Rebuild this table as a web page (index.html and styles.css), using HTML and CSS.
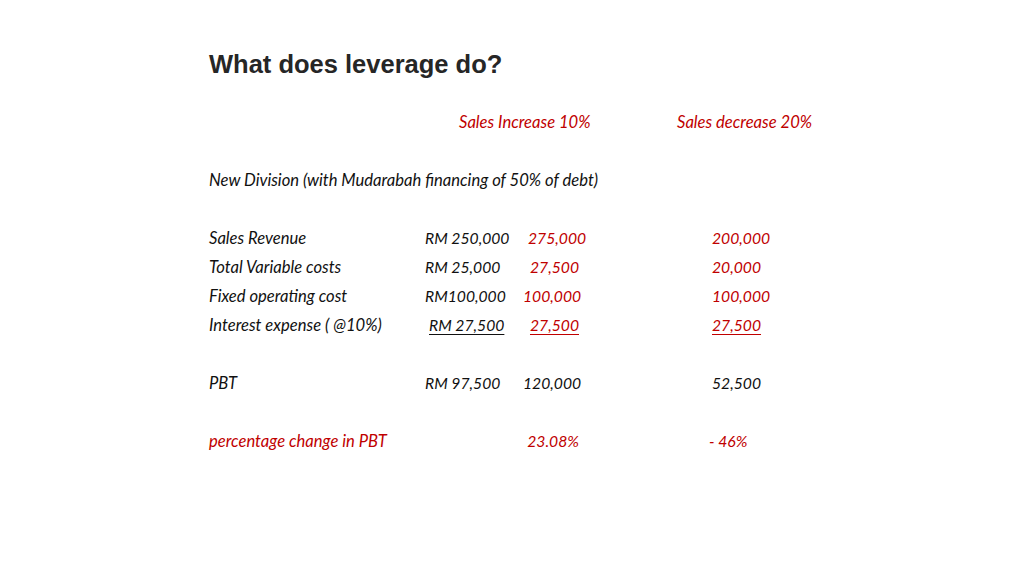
FILE: index.html
```html
<!DOCTYPE html>
<html>
<head>
<meta charset="utf-8">
<link rel="stylesheet" href="styles.css">
</head>
<body>
<main class="slide">
  <h1 class="title">What does leverage do?</h1>
  <div class="sheet">
    <div class="row head">
      <span class="c1"></span><span class="c2"></span>
      <span class="c3 red hd1">Sales Increase 10%</span>
      <span class="c4 red hd2">Sales decrease 20%</span>
    </div>
    <div class="row blank"></div>
    <div class="row"><span class="wide">New Division (with Mudarabah financing of 50% of debt)</span></div>
    <div class="row blank"></div>
    <div class="row">
      <span class="c1">Sales Revenue</span><span class="c2">RM 250,000</span>
      <span class="c3 red s-275">275,000</span><span class="c4 red">200,000</span>
    </div>
    <div class="row">
      <span class="c1">Total Variable costs</span><span class="c2">RM 25,000</span>
      <span class="c3 red">27,500</span><span class="c4 red">20,000</span>
    </div>
    <div class="row">
      <span class="c1">Fixed operating cost</span><span class="c2">RM100,000</span>
      <span class="c3 red">100,000</span><span class="c4 red">100,000</span>
    </div>
    <div class="row">
      <span class="c1">Interest expense ( @10%)</span><span class="c2 ind"><u>RM 27,500</u></span>
      <span class="c3 red"><u>27,500</u></span><span class="c4 red"><u>27,500</u></span>
    </div>
    <div class="row blank"></div>
    <div class="row">
      <span class="c1">PBT</span><span class="c2">RM 97,500</span>
      <span class="c3">120,000</span><span class="c4">52,500</span>
    </div>
    <div class="row blank"></div>
    <div class="row red">
      <span class="c1">percentage change in PBT</span><span class="c2"></span>
      <span class="c3">23.08%</span><span class="c4 neg">- 46%</span>
    </div>
  </div>
</main>
</body>
</html>
```

FILE: styles.css
```css
* { box-sizing: border-box; }
html, body { margin: 0; padding: 0; background: #fff; }
.slide {
  width: 1024px;
  height: 575px;
  padding: 49px 0 0 209px;
  overflow: hidden;
}
.title {
  margin: 0;
  font-family: "Liberation Sans", Arial, sans-serif;
  font-weight: bold;
  font-size: 25.5px;
  line-height: 30px;
  color: #262626;
}
.sheet {
  margin-top: 29px;
  font-family: Lato, "Open Sans", sans-serif;
  font-style: italic;
  font-size: 16.6px;
  color: #111;
}
.row {
  display: grid;
  grid-template-columns: 216px 98px 56px 1fr;
  height: 29px;
  line-height: 29px;
  white-space: nowrap;
}
.row .wide { grid-column: 1 / -1; }
.c2, .c3, .c4 { font-size: 15.7px; }
.hd1, .hd2 { font-size: 16.6px; }
.red { color: #c00000; }
.c3 { text-align: right; }
.c4 { padding-left: 133px; }
.hd1 { text-align: left; margin-left: -64px; }
.hd2 { padding-left: 98px; }
.s-275 { position: relative; left: 5px; }
.ind { padding-left: 4px; }
.neg { padding-left: 130px; }
u { text-decoration-thickness: 1px; text-underline-offset: 3px; }
```
